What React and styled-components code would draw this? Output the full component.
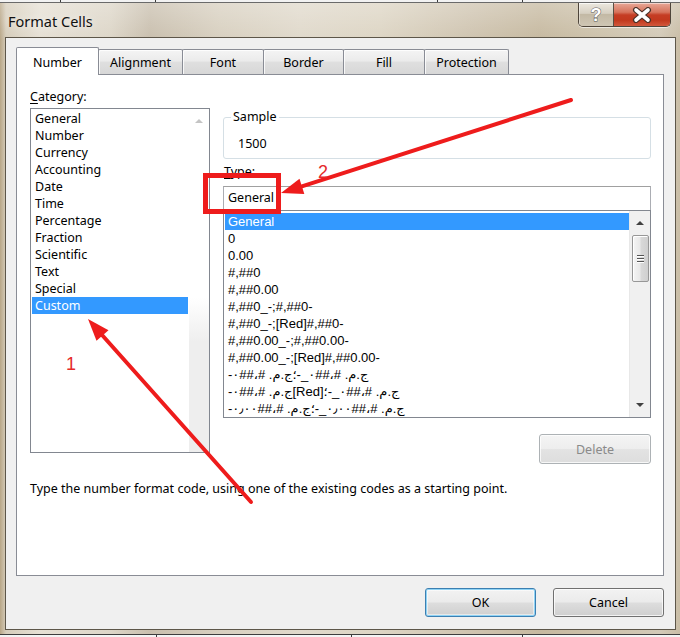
import React from 'react';
import styled, { createGlobalStyle } from 'styled-components';

const GlobalStyle = createGlobalStyle`
  html, body { margin: 0; padding: 0; }
  body {
    width: 680px;
    height: 637px;
    overflow: hidden;
    font-family: "Noto Sans", "Liberation Sans", sans-serif;
    color: #000;
  }
`;

const UI_FONT = `"Noto Sans", "Liberation Sans", "DejaVu Sans", sans-serif`;
const LIST_FONT = `"Liberation Sans", "DejaVu Sans", sans-serif`;

const Window = styled.div`
  position: relative;
  width: 680px;
  height: 637px;
  display: flex;
  flex-direction: column;
  overflow: hidden;
  background:
    linear-gradient(180deg, rgba(255,255,255,0.28) 0px, rgba(255,255,255,0) 40px),
    linear-gradient(90deg, #b8a687 0px, #d6cdbb 6px, #e6e0d4 40px, #ddd6c8 110px, #c9bfae 150px,
      #d8d0c0 220px, #e0d9cb 300px, #ddd5c4 380px, #cfc4b0 470px, #c6b9a0 540px, #cdc2ab 600px,
      #d3cab8 660px, #c9bda6 680px);
`;

const BackStrip = styled.div`
  height: 2px;
  flex: none;
  background: #f2f2f2;
  border-bottom: 1px solid #6a6a6a;
  display: flex;
`;

const GridLine = styled.span`
  width: 1px;
  height: 100%;
  background: #3a3a3a;
  margin-left: ${p => p.$gap}px;
`;

const TitleBar = styled.div`
  height: 34px;
  flex: none;
  display: flex;
  align-items: flex-start;
  padding-left: 8px;
`;

const Title = styled.div`
  margin-top: 8px;
  font-family: ${UI_FONT};
  font-size: 14.5px;
  line-height: 20px;
  color: #111;
  text-shadow: 0 0 8px rgba(255,255,255,0.9);
`;

const CaptionGroup = styled.div`
  margin-left: auto;
  margin-right: 9px;
  display: flex;
  height: 23px;
  border: 1px solid #4e453b;
  border-top: none;
  border-radius: 0 0 5px 5px;
  overflow: hidden;
  box-shadow: 0 1px 0 rgba(255,255,255,0.6);
`;

const HelpButton = styled.div`
  width: 34px;
  height: 100%;
  display: flex;
  align-items: center;
  justify-content: center;
  border-right: 1px solid #5a4f44;
  background: linear-gradient(180deg, #ece8df 0%, #d6cfc1 45%, #c3b9a5 50%, #cfc6b4 100%);
  box-shadow: inset 0 1px 0 rgba(255,255,255,0.7), inset 1px 0 0 rgba(255,255,255,0.4);
`;

const HelpGlyph = styled.span`
  font-family: "Liberation Sans", sans-serif;
  font-weight: bold;
  font-size: 18px;
  line-height: 18px;
  color: #fff;
  -webkit-text-stroke: 1px #5b5b5b;
  paint-order: stroke fill;
`;

const CloseButton = styled.div`
  width: 56px;
  height: 100%;
  display: flex;
  align-items: center;
  justify-content: center;
  background: linear-gradient(180deg, #e8a897 0%, #d6735c 40%, #c53d24 52%, #c2391e 75%, #d2583c 100%);
  box-shadow: inset 0 1px 0 rgba(255,255,255,0.5);
`;

const Client = styled.div`
  box-sizing: border-box;
  width: 671px;
  height: 593px;
  margin-left: 5px;
  flex: none;
  background: #f0f0f0;
  border: 1px solid #5d5649;
  padding: 9px 11px 0 10px;
  display: flex;
  flex-direction: column;
`;

const TabStrip = styled.div`
  position: relative;
  z-index: 1;
  height: 28px;
  margin-bottom: -1px;
  display: flex;
  align-items: flex-end;
`;

const Tab = styled.div`
  box-sizing: border-box;
  position: relative;
  z-index: ${p => (p.$active ? 2 : 1)};
  width: ${p => p.$w}px;
  height: ${p => (p.$active ? 28 : 25)}px;
  margin-left: -1px;
  margin-bottom: ${p => (p.$active ? 0 : 1)}px;
  &:first-child { margin-left: 0; }
  border: 1px solid #898c95;
  border-bottom: none;
  border-radius: 2px 2px 0 0;
  padding-top: ${p => (p.$active ? 7 : 5)}px;
  text-align: center;
  font-family: ${UI_FONT};
  font-size: 12.5px;
  line-height: 16px;
  background: ${p =>
    p.$active
      ? '#fff'
      : 'linear-gradient(180deg, #f4f4f4 0%, #ebebeb 45%, #dfdfdf 52%, #d7d7d7 100%)'};
  box-shadow: ${p => (p.$active ? 'none' : 'inset 1px 1px 0 rgba(255,255,255,0.8)')};
`;

const Panel = styled.div`
  box-sizing: border-box;
  width: 648px;
  height: 502px;
  background: #fff;
  border: 1px solid #898c95;
  padding: 14px 12px 0 13px;
  display: flex;
  flex-direction: column;
`;

const Columns = styled.div`
  display: grid;
  grid-template-columns: 180px 428px;
  column-gap: 13px;
  align-items: start;
`;

const Column = styled.div`
  display: flex;
  flex-direction: column;
`;

const Label = styled.div`
  font-family: ${UI_FONT};
  font-size: 12.5px;
  line-height: 16px;
  margin-top: ${p => p.$mt || 0}px;
  padding-left: ${p => p.$pl || 0}px;
  u { text-decoration-thickness: 1px; text-underline-offset: 2px; }
`;

const ListBox = styled.div`
  box-sizing: border-box;
  height: ${p => p.$h}px;
  margin-top: ${p => p.$mt || 0}px;
  border: 1px solid #828790;
  background: #fff;
  display: flex;
`;

const Items = styled.div`
  flex: 1;
  min-width: 0;
  padding: ${p => p.$pt}px 0 0 1px;
  overflow: hidden;
`;

const Item = styled.div`
  height: 17px;
  line-height: 17px;
  padding-left: 3px;
  white-space: nowrap;
  font-family: ${p => (p.$list ? LIST_FONT : UI_FONT)};
  font-size: ${p => (p.$list ? 13 : 12.5)}px;
  background: ${p => (p.$sel ? '#3399ff' : 'transparent')};
  color: ${p => (p.$sel ? '#fff' : '#000')};
`;

const Visual = styled.bdo`
  unicode-bidi: bidi-override;
  direction: ltr;
`;

const ScrollBar = styled.div`
  width: 20px;
  flex: none;
  display: flex;
  flex-direction: column;
  align-items: center;
  background: ${p =>
    p.$disabled
      ? 'linear-gradient(180deg, #ffffff 0%, #ffffff 55%, #eeeeee 68%, #eeeeee 100%)'
      : '#f0f0f0'};
  border-left: 1px solid ${p => (p.$disabled ? '#ffffff' : '#e8e8e8')};
`;

const ArrowCell = styled.div`
  height: 24px;
  width: 100%;
  flex: none;
  display: flex;
  align-items: center;
  justify-content: center;
  &::before {
    content: '';
    width: 0;
    height: 0;
    border-left: 4px solid transparent;
    border-right: 4px solid transparent;
    ${p => (p.$down ? 'border-top' : 'border-bottom')}: 4px solid ${p => (p.$disabled ? '#c4c4c4' : '#404040')};
  }
`;

const Thumb = styled.div`
  box-sizing: border-box;
  width: 17px;
  height: 47px;
  flex: none;
  border: 1px solid #979797;
  border-radius: 2px;
  background: linear-gradient(90deg, #f5f5f5 0%, #e9e9e9 45%, #d8d8d8 55%, #cfcfcf 100%);
  box-shadow: inset 1px 1px 0 #fff;
  display: flex;
  flex-direction: column;
  align-items: center;
  justify-content: center;
  gap: 2px;
`;

const Grip = styled.span`
  width: 7px;
  height: 1px;
  background: #555;
  box-shadow: 0 1px 0 #fff;
`;

const Spacer = styled.div`
  flex: 1;
`;

const GroupBox = styled.fieldset`
  box-sizing: border-box;
  margin: 20px 0 0 0;
  height: 50px;
  padding: 0 0 0 7px;
  border: 1px solid #d5dfe5;
  border-radius: 3px;
  min-width: 0;
`;

const Legend = styled.legend`
  padding: 0 2px;
  font-family: ${UI_FONT};
  font-size: 12.5px;
  line-height: 16px;
`;

const SampleValue = styled.div`
  font-family: ${UI_FONT};
  font-size: 12.5px;
  line-height: 16px;
  padding-left: 7px;
  margin-top: 11px;
`;

const TextInput = styled.div`
  box-sizing: border-box;
  height: 24px;
  margin-top: 6px;
  border: 1px solid #abadb3;
  border-top-color: #a0a0a0;
  border-bottom: none;
  padding-left: 4px;
  font-family: ${UI_FONT};
  font-size: 12.5px;
  line-height: 22px;
  background: #fff;
`;

const Button = styled.div`
  box-sizing: border-box;
  width: ${p => p.$w || 111}px;
  height: ${p => p.$h || 29}px;
  margin-top: ${p => p.$mt || 0}px;
  align-self: flex-end;
  display: flex;
  align-items: center;
  justify-content: center;
  border-radius: 3px;
  font-family: ${UI_FONT};
  font-size: 12.5px;
  color: ${p => (p.$disabled ? '#8a8a8a' : '#000')};
  border: 1px solid ${p => (p.$default ? '#3c7fb1' : p.$disabled ? '#adb2b5' : '#707070')};
  background: ${p =>
    p.$disabled
      ? 'linear-gradient(180deg, #f4f4f4 0%, #eeeeee 48%, #e3e3e3 52%, #dddddd 100%)'
      : 'linear-gradient(180deg, #f2f2f2 0%, #ebebeb 48%, #dddddd 52%, #cfcfcf 100%)'};
  box-shadow: ${p =>
    p.$default
      ? 'inset 0 0 0 1px #8fd3f5, inset 0 0 0 2px rgba(255,255,255,0.5)'
      : 'inset 0 0 0 1px rgba(255,255,255,0.75)'};
`;

const Description = styled.div`
  margin-top: 17px;
  font-family: ${UI_FONT};
  font-size: 12.5px;
  line-height: 16px;
`;

const ButtonRow = styled.div`
  margin-top: 12px;
  display: flex;
  justify-content: flex-end;
  gap: 17px;
`;

const BottomFrame = styled.div`
  flex: 1;
  display: flex;
  flex-direction: column;
  justify-content: flex-end;
`;

const BackBottom = styled.div`
  height: 2px;
  border-top: 1px solid #3d3d3d;
  background: #f4f4f4;
  display: flex;
`;

const Overlay = styled.svg`
  position: absolute;
  left: 0;
  top: 0;
  width: 680px;
  height: 637px;
  pointer-events: none;
  z-index: 5;
`;

const Marker = styled.span`
  position: absolute;
  z-index: 6;
  left: ${p => p.$x}px;
  top: ${p => p.$y}px;
  font-family: "Liberation Sans", sans-serif;
  font-size: 18px;
  line-height: 18px;
  color: #e52a2a;
`;

const categories = [
  'General', 'Number', 'Currency', 'Accounting', 'Date', 'Time',
  'Percentage', 'Fraction', 'Scientific', 'Text', 'Special', 'Custom',
];

const types = [
  'General',
  '0',
  '0.00',
  '#,##0',
  '#,##0.00',
  '#,##0_-;#,##0-',
  '#,##0_-;[Red]#,##0-',
  '#,##0.00_-;#,##0.00-',
  '#,##0.00_-;[Red]#,##0.00-',
  '-٠##،# .م.ج؛-_٠##،# .م.ج',
  '-٠##،# .م.ج[Red]؛-_٠##،# .م.ج',
  '-٠٫٠٠##،# .م.ج؛-_٠٫٠٠##،# .م.ج',
];

const tabs = [
  { name: 'Number', w: 83 },
  { name: 'Alignment', w: 85 },
  { name: 'Font', w: 82 },
  { name: 'Border', w: 81 },
  { name: 'Fill', w: 82 },
  { name: 'Protection', w: 85 },
];

const RED = '#ee1c1c';

export default function App() {
  return (
    <>
      <GlobalStyle />
      <Window>
        <BackStrip>
          <GridLine $gap={60} />
          <GridLine $gap={94} />
          <GridLine $gap={281} />
          <GridLine $gap={84} />
          <GridLine $gap={127} />
        </BackStrip>
        <TitleBar>
          <Title>Format Cells</Title>
          <CaptionGroup>
            <HelpButton>
              <HelpGlyph>?</HelpGlyph>
            </HelpButton>
            <CloseButton>
              <svg width="20" height="16" viewBox="0 0 20 16">
                <path d="M4 3 L16 13 M16 3 L4 13" stroke="#4a3128" strokeWidth="6" strokeLinecap="round" />
                <path d="M4 3 L16 13 M16 3 L4 13" stroke="#ffffff" strokeWidth="3.6" strokeLinecap="round" />
              </svg>
            </CloseButton>
          </CaptionGroup>
        </TitleBar>

        <Client>
          <TabStrip>
            {tabs.map((t, i) => (
              <Tab key={t.name} $w={t.w} $active={i === 0}>
                {t.name}
              </Tab>
            ))}
          </TabStrip>
          <Panel>
            <Columns>
              <Column>
                <Label>
                  <u>C</u>ategory:
                </Label>
                <ListBox $h={345} $mt={3}>
                  <Items $pt={1}>
                    {categories.map(c => (
                      <Item key={c} $sel={c === 'Custom'}>
                        {c}
                      </Item>
                    ))}
                  </Items>
                  <ScrollBar $disabled>
                    <ArrowCell $disabled />
                  </ScrollBar>
                </ListBox>
              </Column>
              <Column>
                <GroupBox>
                  <Legend>Sample</Legend>
                  <SampleValue>1500</SampleValue>
                </GroupBox>
                <Label $mt={5} $pl={1}>
                  <u>T</u>ype:
                </Label>
                <TextInput>General</TextInput>
                <ListBox $h={208}>
                  <Items $pt={2}>
                    {types.map((t, i) => (
                      <Item key={t} $list $sel={i === 0}>
                        <Visual dir="ltr">{t}</Visual>
                      </Item>
                    ))}
                  </Items>
                  <ScrollBar>
                    <ArrowCell />
                    <Thumb>
                      <Grip />
                      <Grip />
                      <Grip />
                    </Thumb>
                    <Spacer />
                    <ArrowCell $down />
                  </ScrollBar>
                </ListBox>
                <Button $disabled $w={112} $h={30} $mt={16}>
                  Delete
                </Button>
              </Column>
            </Columns>
            <Description>
              Type the number format code, using one of the existing codes as a starting point.
            </Description>
          </Panel>
          <ButtonRow>
            <Button $default $w={111}>OK</Button>
            <Button $w={111}>Cancel</Button>
          </ButtonRow>
        </Client>

        <BottomFrame>
          <BackBottom>
            <GridLine $gap={156} />
            <GridLine $gap={194} />
            <GridLine $gap={170} />
          </BackBottom>
        </BottomFrame>

        <Overlay viewBox="0 0 680 637">
          <rect x="205.5" y="175.5" width="73" height="36" fill="none" stroke={RED} strokeWidth="5" />
          <line x1="251" y1="502" x2="102.5" y2="335.5" stroke={RED} strokeWidth="4" strokeLinecap="round" />
          <polygon points="88,319 108.5,330.2 96.5,340.8" fill={RED} />
          <line x1="571" y1="100" x2="301.9" y2="186.3" stroke={RED} strokeWidth="4" strokeLinecap="round" />
          <polygon points="281,193 304.3,193.9 299.5,178.7" fill={RED} />
        </Overlay>
        <Marker $x={66} $y={355}>1</Marker>
        <Marker $x={318} $y={163}>2</Marker>
      </Window>
    </>
  );
}
